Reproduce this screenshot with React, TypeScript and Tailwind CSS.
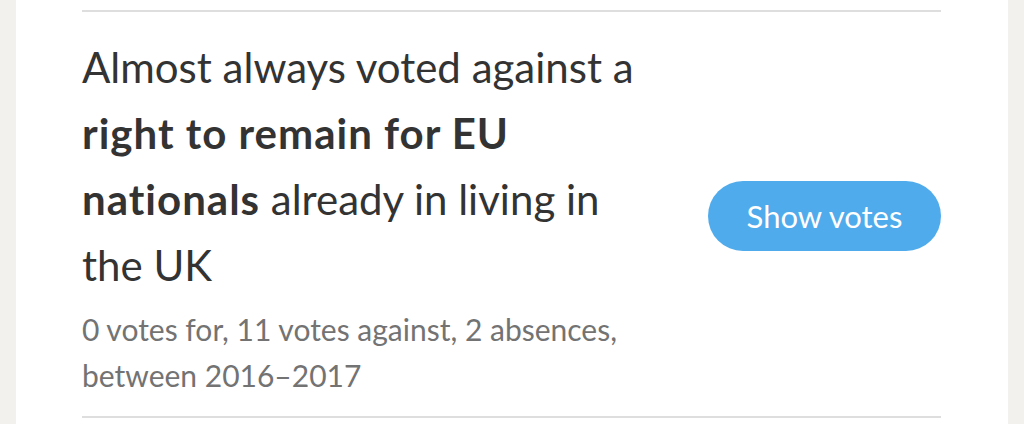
export default function App() {
  return (
    <div className="w-[1024px] h-[424px] overflow-hidden bg-[#f2f1ed] px-4" style={{ fontFamily: "Lato, 'Liberation Sans', sans-serif" }}>
      <div className="h-full bg-white pl-[66px] pr-[67px] pt-[10px]">
        <div className="border-t-2 border-[#dedede] flex items-center justify-between pt-[22px] pb-[18px]">
          <div className="w-[580px]">
            <p className="text-[42px] leading-[66px] text-[#333333]">
              Almost always voted against a <b className="font-bold tracking-[1px]">right to remain for EU nationals</b> already in living in the UK
            </p>
            <p className="mt-[8px] text-[30px] leading-[46px] text-[#737373]">
              0 votes for, 11 votes against, 2 absences, between 2016–2017
            </p>
          </div>
          <button className="h-[70px] w-[233px] rounded-full bg-[#4fabec] text-[31px] text-white">Show votes</button>
        </div>
        <div className="border-t-2 border-[#dedede]" />
      </div>
    </div>
  );
}
